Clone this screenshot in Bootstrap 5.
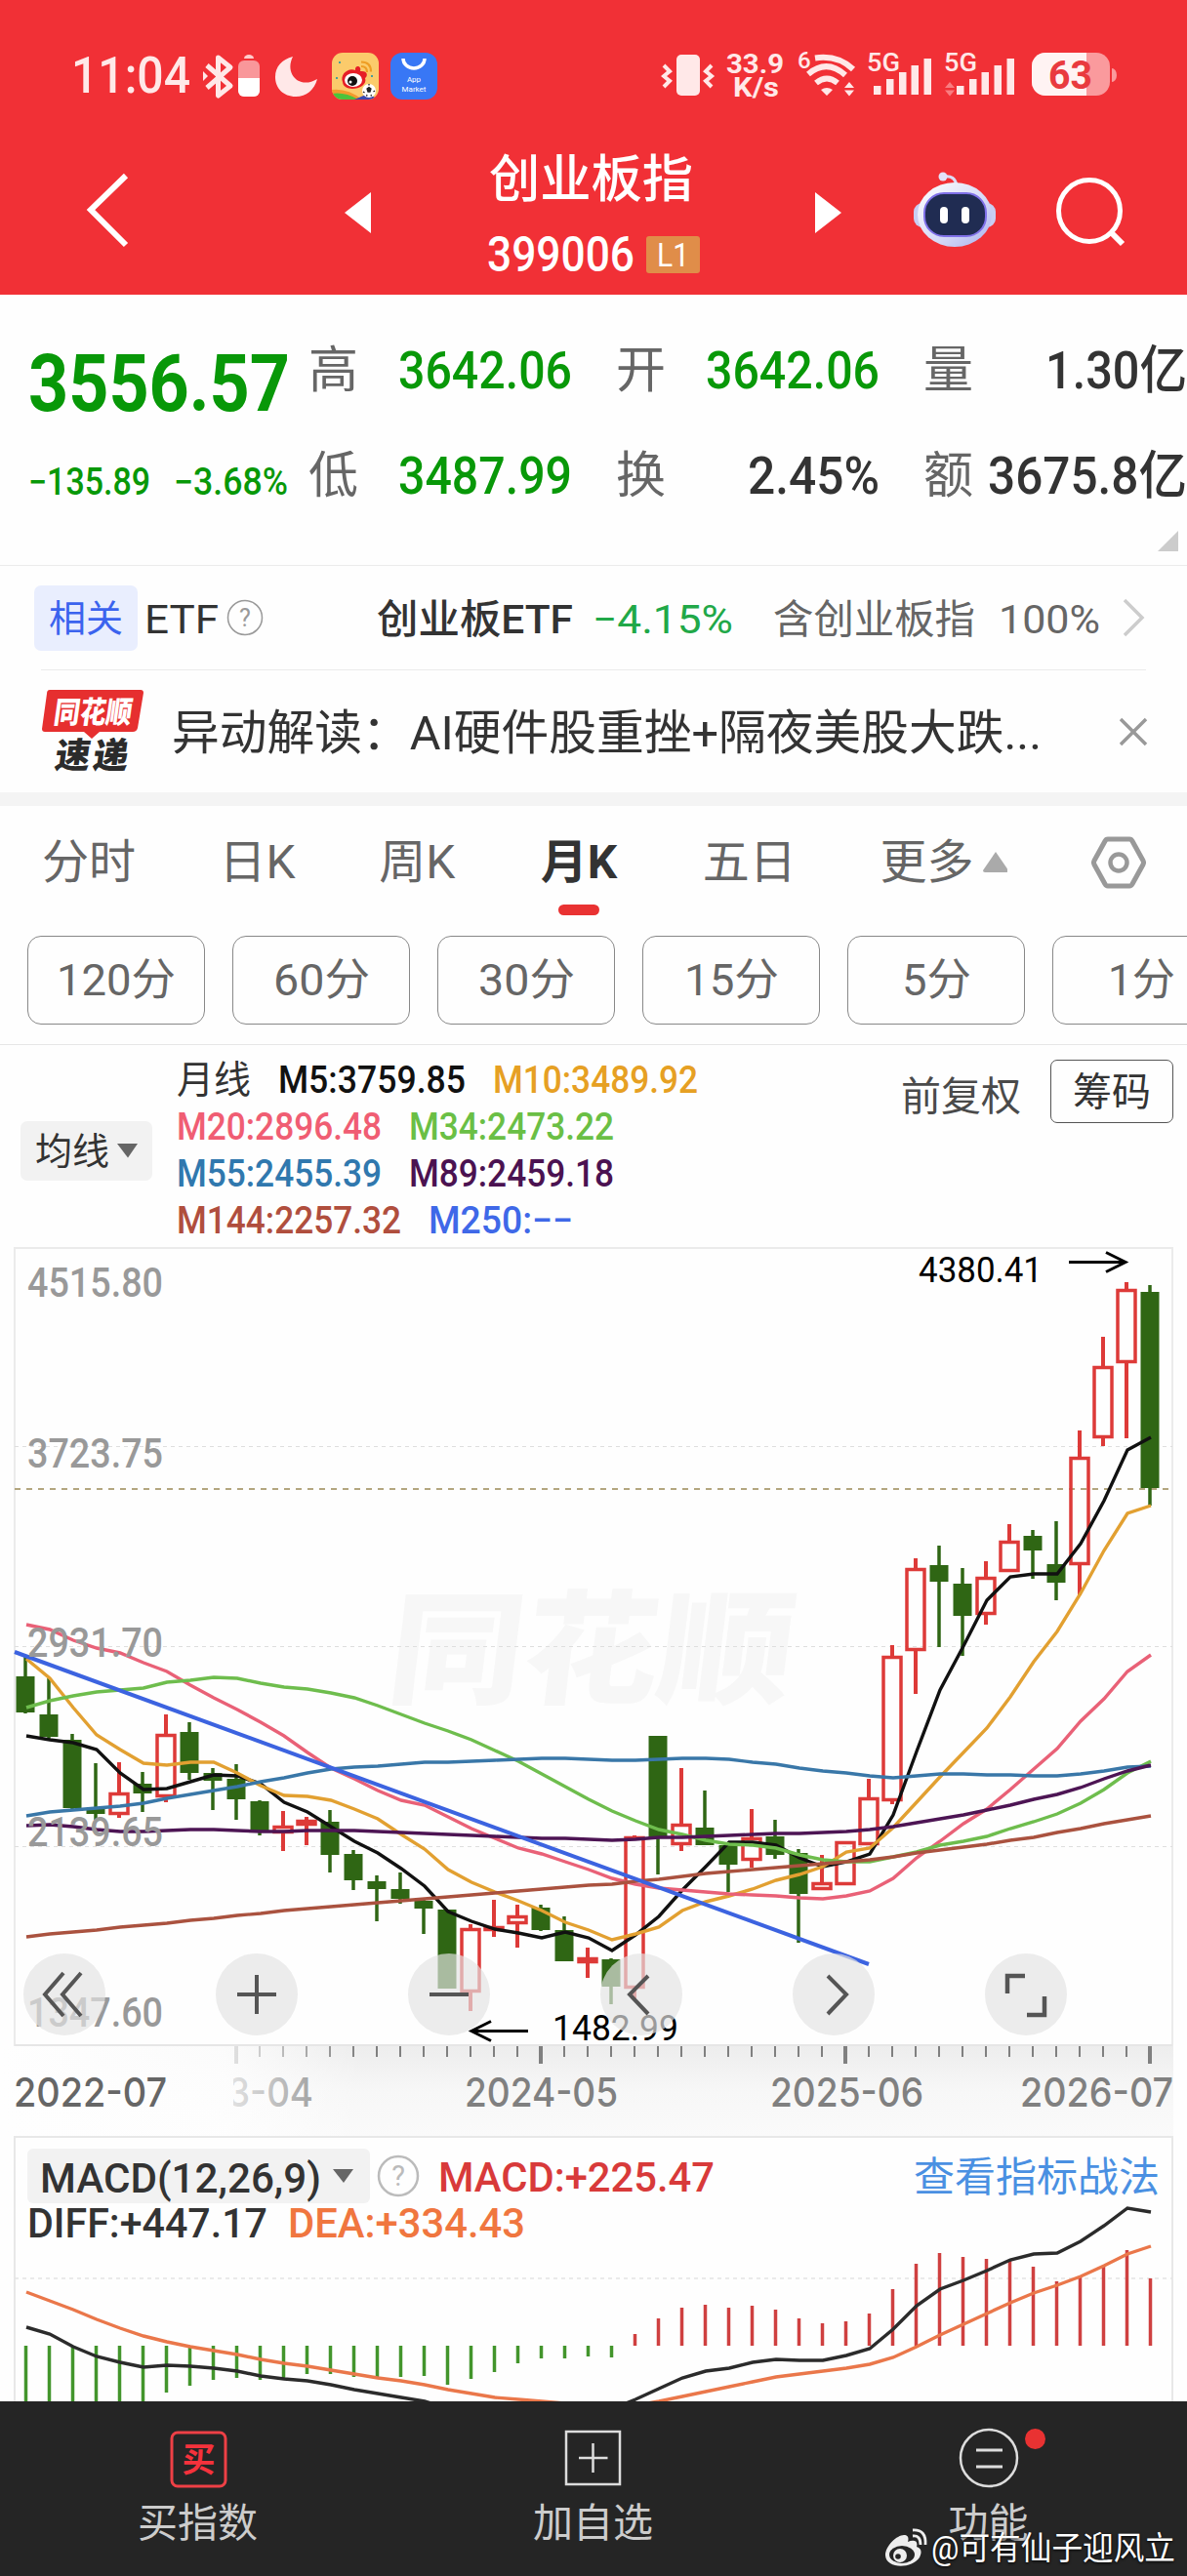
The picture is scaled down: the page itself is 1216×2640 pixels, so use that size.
<!DOCTYPE html>
<html lang="zh">
<head>
    <meta charset="UTF-8">
    <meta content="width=device-width, initial-scale=1.0" name="viewport">
    <title>创业板指 399006</title>
    <link href="https://cdn.jsdelivr.net/npm/bootstrap@5.3.0/dist/css/bootstrap.min.css" rel="stylesheet">
    <style>
        body {
            width: 1216px;
            height: 2640px;
            overflow: hidden;
            background: #fefefe;
            color: #333;
            font-family: Roboto, "Noto Sans CJK SC", sans-serif;
            line-height: 1;
        }
        svg { display: block; flex: none; }
        svg text { white-space: pre; }
        .fit { display: inline-block; white-space: nowrap; transform-origin: 0 50%; flex: none; }
        .fall { color: #089808; }
        .grey { color: #666; }

        /* header */
        .top-red { height: 302px; background: #f13036; color: #fff; }
        .status-row { height: 156px; padding: 0 72px 0 73px; }
        .status-time { font-size: 52px; font-weight: 500; color: #ffe8e8; margin-right: 12px; }
        .nav-row { height: 146px; }
        .title-box { width: 290px; margin-left: 83px; padding-top: 3px; }
        .title-name { font-size: 52px; font-weight: 500; margin: 0 5px 25px 0; }
        .title-code { font-size: 50px; font-weight: 500; }
        .level-tag { width: 55px; height: 38px; background: #e08d49; border-radius: 3px; font-size: 34px; }
        .nav-tools { margin-left: 18px; }

        /* quote */
        .quote { height: 278px; border-bottom: 1px solid #ebebeb; }
        .quote-main { width: 316px; padding-left: 29px; padding-top: 50px; }
        .quote-price { font-size: 82px; font-weight: 700; }
        .quote-diff { font-size: 38px; font-weight: 500; margin-top: 41px; }
        .quote-line { height: 108px; font-size: 51px; }
        .q-cell { width: 315px; padding-right: 45px; }
        .q-cell:last-child { width: 270px; padding-right: 0; }
        .q-cell .val { font-weight: 500; font-size: 53px; }
        .quote-corner { border-left: 21px solid transparent; border-bottom: 21px solid #ccc; right: 9px; bottom: 14px; }

        /* etf and news */
        .etf-row { height: 106px; padding-left: 35px; font-size: 41px; }
        .etf-row > .fit { padding-top: 4px; }
        .etf-tag { width: 106px; height: 67px; border-radius: 7px; background: #e9eefe; color: #3b63ee; font-size: 38px; margin-right: 7px; padding-top: 2px; }
        .etf-name { margin-left: 116px; font-weight: 500; }
        .etf-rate { margin-left: 20px; color: #21a848; }
        .etf-part { margin-left: 41px; }
        .split { height: 1px; margin: 0 42px; background: #ebebeb; }
        .news-row { height: 125px; padding-left: 43px; font-size: 49px; }
        .news-row .fit { margin-left: 29px; padding-top: 3px; }
        .news-close { margin-left: 80px; }
        .band { height: 14px; background: #f4f4f4; }

        /* period tabs */
        .tab-row { height: 133px; padding: 0 42px 17px 43px; font-size: 48px; color: #666; }
        .tab-on { color: #333; font-weight: 700; left: 2px; }
        .tab-on::after { content: ""; position: absolute; width: 42px; height: 11px; border-radius: 6px; background: #e93232; left: 18px; top: 67px; }
        .pill-row { height: 112px; padding-left: 28px; gap: 28px; overflow: hidden; border-bottom: 1px solid #e6e6e6; }
        .pill { width: 182px; height: 91px; flex: none; border: 1px solid #888; border-radius: 14px; font-size: 45px; color: #666; }

        /* moving averages */
        .ma-row { height: 207px; }
        .ma-btn { width: 135px; height: 61px; margin: 78px 0 0 21px; background: #f2f2f2; border-radius: 7px; font-size: 38px; }
        .ma-list { margin: 12px 0 0 25px; width: 600px; font-size: 39px; font-weight: 500; }
        .ma-list > div { height: 48px; gap: 28px; }
        .right-word { font-size: 41px; margin: 33px 30px 0 0; color: #4a4a4a; }
        .chip-btn { width: 126px; height: 65px; margin: 15px 14px 0 0; padding-top: 3px; border: 1.5px solid #555; border-radius: 7px; font-size: 40px; }

        /* chart */
        .zoom-bar { left: 24px; top: 724px; gap: 113px; }
        .round-btn { width: 84px; height: 84px; border-radius: 50%; background: rgba(227, 227, 227, .68); }

        /* bottom menu */
        .bottom-menu { height: 179px; background: #252525; color: #ccc; font-size: 41px; }
        .bottom-menu .item { width: 405px; padding-top: 27px; }
        .bottom-menu .item > svg { margin-bottom: 14px; }
        .red-dot { left: 240px; top: 28px; width: 21px; height: 21px; border-radius: 50%; background: #e93232; }
        .sign { right: 12px; bottom: 8px; color: #fff; font-size: 33px; text-shadow: 0 1px 3px #000; }
    </style>
</head>
<body>
    <header class="top-red">
        <div class="status-row d-flex align-items-center justify-content-between">
            <div class="d-flex align-items-center">
                <span class="status-time fit" data-w="122">11:04</span>
                <svg width="242" height="50" viewBox="206 53 242 50">
                    <path d="M211 67L235 88L222.500 98V59L235 69L211 90" fill="none" stroke="#ffe8e8" stroke-width="5" stroke-linejoin="round"/>
                    <path d="M207 73l5 5-5 5z" fill="#ffe8e8"/>
                    <rect x="243" y="62" width="22" height="37" rx="6" fill="#f9979a"/>
                    <path d="M243 80h22v13a6 6 0 0 1-6 6h-10a6 6 0 0 1-6-6z" fill="#fff"/>
                    <path d="M249 60a5 4 0 0 1 10 0z" fill="#fcc"/>
                    <path d="M299 58C290 76 306 92 324 81C321 92 313 99 302 99C289 99 281 90 281 79C281 68 288 61 299 58z" fill="#ffe8e8"/>
                    <clipPath id="wb"><rect x="339" y="54" width="48" height="48" rx="11"/></clipPath>
                    <g clip-path="url(#wb)">
                        <rect x="339" y="54" width="48" height="48" fill="#fbcb6b"/>
                        <path d="M339 92Q355 90 370 102H339z" fill="#f39a2d"/>
                        <path d="M339 96Q352 94 366 102H339z" fill="#4cc23c"/>
                        <path d="M362 102l14-6 11 6z" fill="#3a49b0"/>
                        <path d="M350 84C347 77 355 69 363 72C362 66 370 67 368 73C376 72 376 78 373 80C377 91 351 96 350 84z" fill="#e61e26"/>
                        <ellipse cx="361" cy="82" rx="9" ry="7" fill="#fff"/>
                        <circle cx="360" cy="83" r="5" fill="#111"/>
                        <circle cx="358" cy="84" r="1.500" fill="#fff"/>
                        <path d="M369 68q6 0 6 6M369 63.500q10 0 10 10" fill="none" stroke="#ee9d24" stroke-width="2.200"/>
                        <circle cx="377" cy="93" r="7" fill="#fff"/>
                        <path d="M375 91l2-1.500 2 1.500-1 3h-2zM377 86v1.500M371 94l1.500 1M383 93l-1.500 1M374.500 98.500l.5-1.500M379.500 98.500l-.5-1.500" fill="#222" stroke="#222" stroke-width="1.300"/>
                        <path d="M346 63h2v2h-2zM379 77h2v2h-2zM343 79h2v2h-2z" fill="#4a9d9a"/>
                    </g>
                    <rect x="399" y="54" width="48" height="48" rx="12" fill="#3877f5"/>
                    <path d="M412 60a11 10 0 0 0 22 0" fill="none" stroke="#fff" stroke-width="3.500"/>
                    <text x="423" y="84" font-size="8" text-anchor="middle" fill="#fff">App</text>
                    <text x="423" y="94" font-size="8" text-anchor="middle" fill="#fff">Market</text>
                </svg>
            </div>
            <svg width="467" height="52" viewBox="676 52 467 52">
                <rect x="692" y="56" width="24" height="42" rx="5" fill="#ffe8e8"/>
                <path d="M679 67l6 6-6 5 6 5-6 6M728 67l-6 6 6 5-6 5 6 6" fill="none" stroke="#ffe8e8" stroke-width="4"/>
                <g fill="#ffe8e8" font-weight="700">
                    <text x="743" y="75" font-size="28" textLength="59" lengthAdjust="spacingAndGlyphs">33.9</text>
                    <text x="750" y="99" font-size="28" textLength="47" lengthAdjust="spacingAndGlyphs">K/s</text>
                    <text x="816" y="70" font-size="24" font-weight="500">6</text>
                    <text x="887" y="73" font-size="25" font-weight="500" textLength="34" lengthAdjust="spacingAndGlyphs">5G</text>
                    <text x="966" y="73" font-size="25" font-weight="500" textLength="34" lengthAdjust="spacingAndGlyphs">5G</text>
                </g>
                <path d="M834 59.500Q857 56 873 71M827 76Q846 60 865 77M835 85Q846 76 857 85" fill="none" stroke="#ffe8e8" stroke-width="6"/>
                <path d="M840 92q6-4 12 0l-6 6zM864 90l5-6 5 6zM864 92.500l5 6 5-6z" fill="#ffe8e8"/>
                <path d="M894 88h7.500v9h-7.500zM907 81h7.500v16h-7.500zM920 74h7.500v23h-7.500zM932.500 67h7.500v30h-7.500zM945.500 60h7.500v37h-7.500z" fill="#ffe8e8"/>
                <path d="M979 88h7.500v9h-7.500zM992 81h7.500v16h-7.500zM1004.500 74h7.500v23h-7.500zM1017.500 67h7.500v30h-7.500zM1030.500 60h7.500v37h-7.500z" fill="#ffe8e8"/>
                <path d="M967 90l5-6 5 6zM967 92.500l5 6 5-6z" fill="#f97d80"/>
                <rect x="1056" y="54" width="80" height="44" rx="14" fill="#fa9a9d"/>
                <path d="M1070 54h42v44h-42a14 14 0 0 1-14-14v-16a14 14 0 0 1 14-14z" fill="#fff3f3"/>
                <path d="M1138 70a5 7 0 0 1 0 14z" fill="#fa9a9d"/>
                <text x="1073" y="91" font-size="40" font-weight="700" fill="#e93a3f" textLength="45" lengthAdjust="spacingAndGlyphs">63</text>
            </svg>
        </div>
        <div class="nav-row d-flex">
            <svg width="380" height="110" viewBox="0 156 380 110">
                <path d="M129 180L93 215L129 251" fill="none" stroke="#fff" stroke-width="6"/>
                <path d="M353 218L380 197V239z" fill="#fff"/>
            </svg>
            <div class="title-box d-flex flex-column align-items-center">
                <span class="title-name fit" data-w="209">创业板指</span>
                <div class="d-flex align-items-center gap-2">
                    <span class="title-code fit" data-w="151">399006</span>
                    <span class="level-tag d-flex align-items-center justify-content-center ms-1"><span class="fit" data-w="33">L1</span></span>
                </div>
            </div>
            <svg class="nav-tools" width="400" height="110" viewBox="771 156 400 110">
                <path d="M862 218L835 197V239z" fill="#fff"/>
                <defs>
                    <linearGradient id="shell" x1="0" y1="0" x2="1" y2="1">
                        <stop offset="0" stop-color="#fff"/><stop offset=".6" stop-color="#d5d8f6"/><stop offset="1" stop-color="#a9b0ee"/>
                    </linearGradient>
                </defs>
                <path d="M967 181q11-2 13 9" fill="none" stroke="#dcdcf5" stroke-width="3"/>
                <circle cx="966" cy="181" r="4.500" fill="#e3e3fa"/>
                <rect x="936" y="208" width="84" height="25" rx="9" fill="#c9cdf3"/>
                <ellipse cx="978" cy="220" rx="38" ry="33" fill="url(#shell)"/>
                <rect x="947" y="198" width="63" height="44" rx="20" fill="#202c52" stroke="#7f70e8" stroke-width="2"/>
                <rect x="963" y="212" width="8" height="17" rx="4" fill="#fff"/>
                <rect x="985" y="212" width="8" height="17" rx="4" fill="#fff"/>
                <circle cx="1116" cy="216" r="31.500" fill="none" stroke="#fff" stroke-width="5"/>
                <path d="M1138 238L1150 250" stroke="#fff" stroke-width="6"/>
            </svg>
        </div>
    </header>

    <section class="quote d-flex position-relative">
        <div class="quote-main fall">
            <div class="quote-price"><span class="fit" data-w="268">3556.57</span></div>
            <div class="quote-diff d-flex">
                <span class="fit" data-w="125">−135.89</span>
                <span class="fit ms-4" data-w="117">−3.68%</span>
            </div>
        </div>
        <div class="pt-4">
            <div class="quote-line d-flex align-items-center">
                <div class="q-cell d-flex justify-content-between"><span class="grey">高</span><span class="val fall fit" data-w="178">3642.06</span></div>
                <div class="q-cell d-flex justify-content-between"><span class="grey">开</span><span class="val fall fit" data-w="178">3642.06</span></div>
                <div class="q-cell d-flex justify-content-between"><span class="grey">量</span><span class="val fit" data-w="145">1.30亿</span></div>
            </div>
            <div class="quote-line d-flex align-items-center">
                <div class="q-cell d-flex justify-content-between"><span class="grey">低</span><span class="val fall fit" data-w="178">3487.99</span></div>
                <div class="q-cell d-flex justify-content-between"><span class="grey">换</span><span class="val fit" data-w="135">2.45%</span></div>
                <div class="q-cell d-flex justify-content-between"><span class="grey">额</span><span class="val fit" data-w="204">3675.8亿</span></div>
            </div>
        </div>
        <span class="quote-corner position-absolute"></span>
    </section>

    <section class="etf-row d-flex align-items-center">
        <span class="etf-tag d-flex align-items-center justify-content-center">相关</span>
        <span class="fit" data-w="76">ETF</span>
        <svg class="ms-2" width="38" height="38" viewBox="0 0 38 38">
            <circle cx="19" cy="19" r="17.500" fill="none" stroke="#999" stroke-width="1.500"/>
            <text x="19" y="28" font-size="25" text-anchor="middle" fill="#999">?</text>
        </svg>
        <span class="etf-name fit" data-w="201">创业板ETF</span>
        <span class="etf-rate fit" data-w="144">−4.15%</span>
        <span class="etf-part grey fit" data-w="207">含创业板指</span>
        <span class="grey fit ms-4" data-w="104">100%</span>
        <svg class="ms-4" width="24" height="42" viewBox="3 0 24 42">
            <path d="M4 3L22 21L4 39" fill="none" stroke="#ccc" stroke-width="3.500"/>
        </svg>
    </section>
    <div class="split"></div>
    <section class="news-row d-flex align-items-center">
        <svg width="104" height="90" viewBox="43 705 104 90">
            <path d="M51 707H144q3 0 3 3L141 746q-1 4-5 4H102l-8 7-8-7H46q-3 0-3-3L48 711q0-4 3-4z" fill="#e62f2f"/>
            <text transform="translate(54 741) skewX(-8)" font-size="31" font-weight="900" fill="#fff" textLength="80" lengthAdjust="spacingAndGlyphs">同花顺</text>
            <text transform="translate(55 787) skewX(-8)" font-size="36" font-weight="900" fill="#2b2b2b" textLength="75" lengthAdjust="spacing">速递</text>
        </svg>
        <span class="fit" data-w="891">异动解读：AI硬件股重挫+隔夜美股大跌...</span>
        <svg class="news-close" width="30" height="30" viewBox="1 0 30 30">
            <path d="M2 2L28 28M28 2L2 28" stroke="#999" stroke-width="3.500"/>
        </svg>
    </section>
    <div class="band"></div>

    <nav class="tab-row d-flex align-items-center justify-content-between">
        <span>分时</span>
        <span>日K</span>
        <span>周K</span>
        <span class="tab-on position-relative">月K</span>
        <span class="ps-1">五日</span>
        <span class="d-flex align-items-center">更多
            <svg class="ms-1" width="31" height="22" viewBox="-6 0 31 22"><path d="M13 0L26 19q0 2-2 2H2q-2 0-2-2z" fill="#aaa"/></svg>
        </span>
        <svg width="56" height="54" viewBox="0 0 56 54">
            <path d="M17 3H39q2 0 3 2L53 25q1 2 0 4L42 49q-1 2-3 2H17q-2 0-3-2L3 29q-1-2 0-4L14 5q1-2 3-2z" fill="none" stroke="#999" stroke-width="5"/>
            <circle cx="28" cy="27" r="8.500" fill="none" stroke="#999" stroke-width="4.500"/>
        </svg>
    </nav>
    <div class="pill-row d-flex">
        <span class="pill d-flex align-items-center justify-content-center"><span class="fit" data-w="122">120分</span></span>
        <span class="pill d-flex align-items-center justify-content-center"><span class="fit" data-w="99">60分</span></span>
        <span class="pill d-flex align-items-center justify-content-center"><span class="fit" data-w="99">30分</span></span>
        <span class="pill d-flex align-items-center justify-content-center"><span class="fit" data-w="97">15分</span></span>
        <span class="pill d-flex align-items-center justify-content-center"><span class="fit" data-w="71">5分</span></span>
        <span class="pill d-flex align-items-center justify-content-center"><span class="fit" data-w="69">1分</span></span>
    </div>

    <section class="ma-row d-flex">
        <span class="ma-btn d-flex align-items-center justify-content-center">均线
            <svg class="ms-2" width="21" height="16" viewBox="0 0 21 16"><path d="M0 0H21L11 14.500z" fill="#666"/></svg>
        </span>
        <div class="ma-list">
            <div class="d-flex align-items-center"><span class="fit fw-normal" data-w="76">月线</span><span class="fit" data-w="192" style="color:#111">M5:3759.85</span><span class="fit" data-w="210" style="color:#e6a023">M10:3489.92</span></div>
            <div class="d-flex align-items-center"><span class="fit" data-w="210" style="color:#f05d73">M20:2896.48</span><span class="fit" data-w="210" style="color:#6abf45">M34:2473.22</span></div>
            <div class="d-flex align-items-center"><span class="fit" data-w="210" style="color:#3078ae">M55:2455.39</span><span class="fit" data-w="210" style="color:#4b1251">M89:2459.18</span></div>
            <div class="d-flex align-items-center"><span class="fit" data-w="230" style="color:#b04e3d">M144:2257.32</span><span class="fit" data-w="148" style="color:#3f68e8">M250:−−</span></div>
        </div>
        <span class="right-word ms-auto fit" data-w="123">前复权</span>
        <span class="chip-btn d-flex align-items-center justify-content-center">筹码</span>
    </section>

    <section class="position-relative">
        <svg id="kline" width="1216" height="819" viewBox="0 1278 1216 819"></svg>
        <div class="zoom-bar position-absolute d-flex">
            <span class="round-btn"><svg viewBox="0 0 84 84"><path d="M41 20L22 42L41 64M59 20L40 42L59 64" fill="none" stroke="#555" stroke-width="4"/></svg></span>
            <span class="round-btn"><svg viewBox="0 0 84 84"><path d="M22 42H62M42 22V62" stroke="#555" stroke-width="4"/></svg></span>
            <span class="round-btn"><svg viewBox="0 0 84 84"><path d="M22 42H62" stroke="#555" stroke-width="4"/></svg></span>
            <span class="round-btn"><svg viewBox="0 0 84 84"><path d="M49 23L30 42L49 62" fill="none" stroke="#555" stroke-width="4"/></svg></span>
            <span class="round-btn"><svg viewBox="0 0 84 84"><path d="M36 23L55 42L36 62" fill="none" stroke="#555" stroke-width="4"/></svg></span>
            <span class="round-btn"><svg viewBox="0 0 84 84"><path d="M41 23H23V41M43 63H61V44" fill="none" stroke="#555" stroke-width="4.500"/></svg></span>
        </div>
    </section>
    <svg id="axis" width="1216" height="92" viewBox="0 2097 1216 92"></svg>
    <svg id="macd" width="1216" height="272" viewBox="0 2189 1216 272"></svg>

    <footer class="bottom-menu d-flex position-relative">
        <div class="item d-flex flex-column align-items-center">
            <svg width="62" height="64" viewBox="171 2489 62 64">
                <rect x="175" y="2494" width="55" height="55" rx="6" fill="none" stroke="#ee4046" stroke-width="3"/>
                <text x="202.500" y="2534" font-size="34" font-weight="700" text-anchor="middle" fill="#f5323c">买</text>
            </svg>
            <span>买指数</span>
        </div>
        <div class="item d-flex flex-column align-items-center">
            <svg width="62" height="64" viewBox="576 2488 62 64">
                <path d="M579 2492H634V2546H579zM592 2519H621.500M606.500 2504V2534" fill="none" stroke="#ddd" stroke-width="2.500"/>
            </svg>
            <span>加自选</span>
        </div>
        <div class="item d-flex flex-column align-items-center position-relative">
            <svg width="110" height="64" viewBox="957 2488 110 64">
                <circle cx="1012" cy="2519" r="29" fill="none" stroke="#ddd" stroke-width="2.500"/>
                <path d="M999 2511H1026M999 2528H1026" stroke="#ddd" stroke-width="3"/>
            </svg>
            <span>功能</span>
            <span class="red-dot position-absolute"></span>
        </div>
        <div class="sign position-absolute d-flex align-items-center gap-1">
            <svg width="44" height="42" viewBox="0 0 44 42">
                <path d="M1 29C1 19 13 8 20 8C25 8 25 12 24 15C29 13 35 13 33 20C39 22 38 27 36 31C28 43 2 43 1 29z" fill="#eee"/>
                <ellipse cx="18" cy="28" rx="13" ry="9" fill="#252525"/>
                <circle cx="16" cy="29" r="7" fill="#eee"/>
                <circle cx="14" cy="30" r="2.800" fill="#252525"/>
                <path d="M29 9Q37 8 37 18M29 3Q43 2 42 18" fill="none" stroke="#eee" stroke-width="2.800"/>
            </svg>
            <span class="fit" data-w="250">@可有仙子迎风立</span>
        </div>
    </footer>

    <script>
        document.querySelectorAll(".fit").forEach(function (el) {
            let w = parseFloat(el.dataset.w);
            let natural = el.getBoundingClientRect().width;
            el.style.width = w + "px";
            el.style.transform = "scaleX(" + w / natural + ")";
        });

        const RED = "#dd3a38", GREEN = "#2f6614";
        const px = i => 26 + 24 * i;

        // month candles: colour, high, body top, body bottom, low
        const candles = [
            ["g",1698,1718,1755,1756],["g",1720,1757,1780,1782],["g",1777,1783,1853,1856],["g",1807,1854,1859,1865],
            ["r",1806,1837,1860,1863],["g",1816,1828,1838,1857],["r",1757,1777,1842,1847],["g",1765,1775,1817,1824],
            ["g",1812,1817,1825,1855],["g",1808,1823,1844,1865],["g",1845,1846,1877,1881],["r",1856,1871,1879,1897],
            ["r",1862,1865,1871,1891],["g",1855,1867,1901,1919],["g",1896,1900,1927,1937],["g",1922,1928,1936,1969],
            ["g",1919,1936,1946,1951],["g",1947,1948,1956,1982],["g",1957,1957,2038,2038],["r",1972,1976,2042,2061],
            ["r",1947,1974,1979,1985],["r",1952,1963,1972,1996],["g",1952,1955,1978,1979],["g",1964,1978,2010,2010],
            ["r",1996,2006,2012,2027],["g",2007,2008,2036,2054],["r",1881,1882,2038,2048],["g",1779,1779,1883,1921],
            ["r",1812,1869,1891,1897],["g",1835,1873,1891,1891],["g",1890,1891,1911,1939],["r",1854,1883,1907,1914],
            ["g",1865,1882,1901,1905],["g",1895,1899,1941,1991],["r",1901,1929,1937,1937],["r",1887,1887,1932,1932],
            ["r",1823,1842,1891,1891],["r",1686,1697,1846,1849],["r",1597,1607,1692,1736],["g",1584,1604,1621,1688],
            ["g",1607,1623,1656,1697],["r",1600,1616,1655,1665],["r",1562,1579,1611,1611],["g",1568,1574,1589,1618],
            ["g",1559,1603,1622,1640],["r",1466,1493,1604,1635],["r",1370,1400,1474,1482],["r",1314,1321,1397,1474],
            ["g",1317,1324,1525,1543]
        ];

        const averages = [
            ["#111", [1779,1783,1786,1793,1817,1834,1833,1826,1819,1820,1828,1847,1857,1872,1887,1899,1915,1933,1959,1969,1977,1981,1986,1980,1986,1999,1983,1964,1937,1913,1888,1888,1891,1904,1913,1908,1900,1860,1795,1732,1687,1640,1616,1613,1613,1582,1538,1486,1473]],
            ["#e2a031", [1700,1720,1750,1778,1793,1807,1809,1806,1806,1817,1830,1840,1841,1845,1854,1864,1880,1895,1916,1929,1939,1948,1958,1970,1978,1988,1982,1975,1958,1949,1943,1936,1927,1921,1913,1898,1894,1873,1847,1821,1796,1771,1739,1703,1672,1633,1589,1551,1543]],
            ["#e96177", [1665,1670,1681,1689,1694,1704,1713,1727,1740,1752,1765,1779,1796,1812,1823,1835,1845,1850,1862,1874,1884,1894,1900,1908,1916,1925,1931,1935,1937,1939,1941,1942,1943,1945,1946,1943,1938,1925,1904,1887,1869,1854,1834,1813,1792,1764,1741,1713,1696]],
            ["#6ebd4d", [1750,1743,1738,1734,1732,1730,1724,1722,1719,1720,1725,1729,1731,1735,1740,1748,1757,1766,1774,1783,1794,1805,1818,1831,1844,1856,1866,1875,1880,1886,1890,1891,1894,1901,1906,1908,1908,1903,1898,1891,1887,1882,1874,1867,1859,1848,1834,1817,1805]],
            ["#3977a8", [1861,1857,1855,1853,1851,1848,1843,1839,1835,1831,1826,1822,1817,1813,1811,1810,1808,1806,1806,1805,1804,1803,1802,1802,1803,1804,1804,1803,1802,1802,1803,1806,1808,1812,1815,1817,1820,1822,1820,1818,1818,1819,1819,1820,1820,1818,1815,1811,1810]],
            ["#4d1554", [1871,1870,1872,1875,1877,1877,1876,1875,1875,1876,1877,1877,1876,1876,1876,1877,1878,1879,1880,1881,1882,1883,1884,1884,1885,1886,1885,1883,1883,1882,1881,1880,1879,1879,1878,1877,1875,1872,1868,1864,1860,1855,1850,1844,1839,1832,1823,1815,1809]],
            ["#aa523f", [1985,1982,1980,1978,1975,1973,1971,1968,1966,1963,1961,1958,1956,1954,1952,1950,1948,1946,1944,1942,1940,1938,1936,1934,1932,1931,1928,1926,1923,1920,1918,1916,1914,1912,1910,1908,1906,1903,1899,1896,1893,1890,1886,1883,1878,1874,1869,1865,1861]]
        ];

        function line(ys, color, width) {
            let pts = ys.map((y, i) => (px(i) + 1) + "," + y).join(" ");
            return `<polyline points="${pts}" fill="none" stroke="${color}" stroke-width="${width}"/>`;
        }
        function label(x, y, size, w, color, str, extra) {
            return `<text x="${x}" y="${y}" font-size="${size}" textLength="${w}" lengthAdjust="spacingAndGlyphs" fill="${color}" ${extra || ""}>${str}</text>`;
        }
        function dash(y, color, width, pattern) {
            return `<path d="M15 ${y}H1201" stroke="${color}" stroke-width="${width}" stroke-dasharray="${pattern}"/>`;
        }

        function drawKline() {
            let s = `<text transform="translate(394 1736) skewX(-7)" font-size="126" font-weight="900" textLength="414" lengthAdjust="spacingAndGlyphs" fill="#f7f7f7">同花顺</text>`;
            s += `<path d="M15 2097V1279H1201V2097" fill="none" stroke="#ebebeb" stroke-width="2"/><path d="M15 2096H1201" stroke="#e6e6e6" stroke-width="2"/>`;
            [1482.5, 1687.5, 1892.5].forEach(y => s += dash(y, "#dedede", 1, "4 4"));
            s += dash(1526, "#b3a67f", 2, "6 6");
            candles.forEach(function (c, i) {
                let x = px(i);
                if (c[0] === "g") {
                    s += `<path d="M${x} ${c[1]}V${c[4]}" stroke="${GREEN}" stroke-width="3.500"/><rect x="${x - 9.5}" y="${c[2]}" width="19" height="${c[3] - c[2]}" fill="${GREEN}"/>`;
                } else {
                    s += `<path d="M${x} ${c[1]}V${c[2]}M${x} ${c[3]}V${c[4]}" stroke="${RED}" stroke-width="4"/><rect x="${x - 9}" y="${c[2] + 1.5}" width="18" height="${Math.max(c[3] - c[2] - 3, 2)}" fill="none" stroke="${RED}" stroke-width="3.500"/>`;
                }
            });
            averages.forEach(a => s += line(a[1], a[0], 3.4));
            s += `<path d="M15 1693L890 2013" stroke="#3c63e0" stroke-width="4"/>`;
            [["4515.80", 1329], ["3723.75", 1504], ["2931.70", 1698], ["2139.65", 1892], ["1347.60", 2077]].forEach(function (l) {
                s += label(28, l[1], 42, 139, "#999", l[0], 'font-weight="500"');
            });
            s += label(941, 1314, 37, 127, "#000", "4380.41") + label(566, 2091, 37, 129, "#000", "1482.99");
            s += `<path d="M1095 1293.500H1152M1133 1283.500L1153 1293.500L1133 1303.500" fill="none" stroke="#000" stroke-width="3"/>`;
            s += `<path d="M541 2081.500H484M503 2071.500L483 2081.500L503 2091.500" fill="none" stroke="#000" stroke-width="3"/>`;
            document.getElementById("kline").innerHTML = s;
        }

        function drawAxis() {
            let s = `<defs>
                <linearGradient id="down" x2="0" y2="1"><stop offset="0" stop-color="#ededed"/><stop offset=".5" stop-color="#f7f7f7"/><stop offset="1" stop-color="#fafafa"/></linearGradient>
                <linearGradient id="fade"><stop offset="0" stop-color="#fefefe"/><stop offset=".62" stop-color="#fefefe" stop-opacity=".82"/><stop offset="1" stop-color="#fefefe" stop-opacity="0"/></linearGradient>
                <clipPath id="cut"><rect x="239" y="2097" width="100" height="92"/></clipPath></defs>
                <rect x="0" y="2097" width="1202" height="92" fill="url(#down)"/>`;
            for (let i = 9; i < 49; i++) {
                let big = (i - 9) % 13 === 0;
                s += `<path d="M${px(i)} 2097V${big ? 2115 : 2108}" stroke="#808080" stroke-width="${big ? 4 : 2}"/>`;
            }
            s += label(164, 2159, 41, 157, "#808080", "2023-04", 'class="ax" clip-path="url(#cut)"');
            s += label(476, 2159, 41, 157, "#808080", "2024-05", 'class="ax"');
            s += label(789, 2159, 41, 157, "#808080", "2025-06", 'class="ax"');
            s += label(1045, 2159, 41, 157, "#808080", "2026-07", 'class="ax"');
            s += `<rect x="0" y="2097" width="370" height="92" fill="url(#fade)"/>`;
            s += label(14, 2159, 41, 157, "#666", "2022-07", 'class="ax"');
            document.getElementById("axis").innerHTML = s;
            document.querySelectorAll(".ax").forEach(function (t) {
                t.setAttribute("font-family", "Inter, Roboto, sans-serif");
                t.setAttribute("font-weight", "500");
            });
        }

        const bars = [2470,2470,2470,2470,2470,2470,2452,2445,2439,2437,2439,2437,2433,2433,2436,2436,2436,2435,2444,2438,2431,2422,2417,2417,2415,2416,2392,2376,2365,2362,2365,2363,2367,2376,2381,2379,2371,2346,2320,2309,2313,2315,2316,2323,2338,2333,2322,2306,2335];
        const diff = [2385,2392,2405,2415,2421,2426,2424,2425,2427,2430,2435,2438,2440,2444,2449,2453,2457,2461,2468,2472,2475,2477,2478,2478,2475,2469,2459,2448,2437,2430,2427,2421,2418,2419,2419,2414,2407,2387,2363,2346,2337,2327,2316,2310,2309,2297,2281,2263,2267];
        const dea = [2349,2358,2367,2377,2386,2394,2400,2405,2409,2413,2418,2422,2425,2429,2433,2437,2440,2444,2449,2453,2457,2459,2461,2463,2465,2466,2465,2461,2456,2451,2446,2441,2436,2433,2430,2427,2423,2416,2405,2393,2382,2371,2360,2350,2342,2333,2322,2310,2302];

        function drawMacd() {
            let s = `<path d="M15 2470V2190H1201V2470" fill="none" stroke="#e8e8e8" stroke-width="2"/>` + dash(2335, "#e3e3e3", 1.5, "4 4");
            bars.forEach(function (y, i) {
                s += `<path d="M${px(i) + 0.5} 2404V${y}" stroke="${y > 2404 ? "#43952c" : "#cf4040"}" stroke-width="3.500"/>`;
            });
            s += line(diff, "#2b2b2b", 3.4) + line(dea, "#ea774a", 3.4);
            s += `<rect x="28" y="2202" width="351" height="56" rx="6" fill="#f2f2f2"/><path d="M341 2223H362L352 2237z" fill="#666"/>`;
            s += label(41, 2247, 43, 288, "#333", "MACD(12,26,9)", 'font-weight="500"');
            s += `<circle cx="408" cy="2230" r="20" fill="none" stroke="#bbb" stroke-width="2.500"/><text x="408" y="2240" font-size="29" text-anchor="middle" fill="#bbb">?</text>`;
            s += label(449, 2246, 43, 283, "#d83a3a", "MACD:+225.47", 'font-weight="500"');
            s += label(28, 2293, 43, 246, "#333", "DIFF:+447.17", 'font-weight="500"');
            s += label(295, 2293, 43, 243, "#f0763f", "DEA:+334.43", 'font-weight="500"');
            s += label(936, 2246, 42, 252, "#4a90e2", "查看指标战法");
            document.getElementById("macd").innerHTML = s;
        }

        drawKline();
        drawAxis();
        drawMacd();
    </script>
    <script src="https://cdn.jsdelivr.net/npm/bootstrap@5.3.0/dist/js/bootstrap.bundle.min.js"></script>
</body>
</html>
